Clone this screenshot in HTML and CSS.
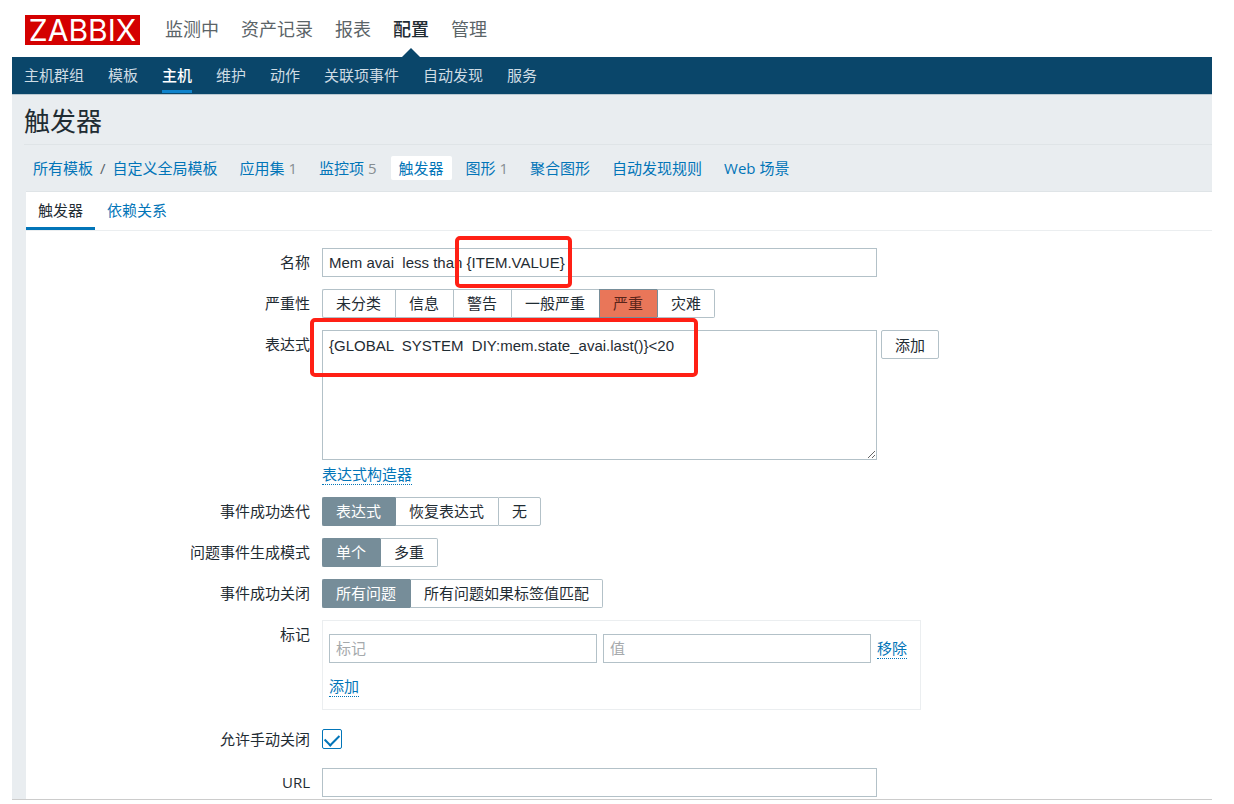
FILE: index.html
```html
<!DOCTYPE html>
<html lang="zh-CN">
<head>
<meta charset="utf-8">
<title>触发器配置</title>
<link rel="stylesheet" href="styles.css">
</head>
<body>
<div class="page">
  <header>
    <nav class="main-nav">
      <a class="logo" href="#">ZABBIX</a>
      <a href="#">监测中</a>
      <a href="#">资产记录</a>
      <a href="#">报表</a>
      <a class="active" href="#">配置</a>
      <a href="#">管理</a>
    </nav>
    <nav class="sub-nav">
      <a href="#">主机群组</a>
      <a href="#">模板</a>
      <a class="active" href="#">主机</a>
      <a href="#">维护</a>
      <a href="#">动作</a>
      <a href="#">关联项事件</a>
      <a href="#">自动发现</a>
      <a href="#">服务</a>
    </nav>
  </header>
  <main>
    <h1>触发器</h1>
    <nav class="object-nav">
      <div class="crumbs"><a href="#">所有模板</a><span>/</span><a href="#">自定义全局模板</a></div>
      <div><a href="#">应用集</a> <sup>1</sup></div>
      <div><a href="#">监控项</a> <sup>5</sup></div>
      <div class="selected"><a href="#">触发器</a></div>
      <div><a href="#">图形</a> <sup>1</sup></div>
      <div><a href="#">聚合图形</a></div>
      <div><a href="#">自动发现规则</a></div>
      <div><a href="#">Web 场景</a></div>
    </nav>
    <section class="panel">
      <div class="tabs">
        <a class="active" href="#">触发器</a>
        <a href="#">依赖关系</a>
      </div>
      <form class="form">
        <label class="name" for="title">名称</label>
        <div class="field">
          <input class="text" id="title" type="text" value="Mem avai  less than {ITEM.VALUE}">
          <span class="mark mark-value"></span>
        </div>

        <span class="name" id="severity">严重性</span>
        <div class="segments severity" role="radiogroup" aria-labelledby="severity">
          <label><input type="radio" name="severity">未分类</label>
          <label><input type="radio" name="severity">信息</label>
          <label><input type="radio" name="severity">警告</label>
          <label><input type="radio" name="severity">一般严重</label>
          <label><input type="radio" name="severity" checked>严重</label>
          <label><input type="radio" name="severity">灾难</label>
        </div>

        <label class="name" for="expression">表达式</label>
        <div class="field">
          <div class="expression">
            <textarea class="text" id="expression">{GLOBAL  SYSTEM  DIY:mem.state_avai.last()}&lt;20</textarea>
            <button class="button" type="button">添加</button>
          </div>
          <button class="link" type="button">表达式构造器</button>
          <span class="mark mark-expression"></span>
        </div>

        <span class="name" id="recovery">事件成功迭代</span>
        <div class="segments" role="radiogroup" aria-labelledby="recovery">
          <label><input type="radio" name="recovery" checked>表达式</label>
          <label><input type="radio" name="recovery">恢复表达式</label>
          <label><input type="radio" name="recovery">无</label>
        </div>

        <span class="name" id="mode">问题事件生成模式</span>
        <div class="segments" role="radiogroup" aria-labelledby="mode">
          <label><input type="radio" name="mode" checked>单个</label>
          <label><input type="radio" name="mode">多重</label>
        </div>

        <span class="name" id="closes">事件成功关闭</span>
        <div class="segments" role="radiogroup" aria-labelledby="closes">
          <label><input type="radio" name="closes" checked>所有问题</label>
          <label><input type="radio" name="closes">所有问题如果标签值匹配</label>
        </div>

        <span class="name">标记</span>
        <div class="tags">
          <div class="tag-row">
            <input class="text" type="text" placeholder="标记" aria-label="标记">
            <input class="text" type="text" placeholder="值" aria-label="值">
            <button class="link" type="button">移除</button>
          </div>
          <button class="link" type="button">添加</button>
        </div>

        <label class="name tall" for="manual">允许手动关闭</label>
        <div class="check-cell"><input class="check" id="manual" type="checkbox" checked></div>

        <label class="name" for="url">URL</label>
        <div class="field"><input class="text" id="url" type="text"></div>
      </form>
    </section>
  </main>
</div>
</body>
</html>
```
FILE: styles.css
```css
* {
  box-sizing: border-box;
}

body {
  margin: 0;
  background: #fff;
  color: #1f2c33;
  font: 15px/20px "Open Sans", "Noto Sans CJK SC", sans-serif;
}

a {
  color: #0275b8;
  text-decoration: none;
}

.page {
  margin: 0 22px 4px 12px;
  border-bottom: 1px solid #ccc;
}

/* Header */
.main-nav {
  display: flex;
  align-items: center;
  gap: 22px;
  height: 57px;
  padding: 0 13px;
  font-size: 18px;
}

.main-nav a {
  color: #5b6468;
}

.main-nav .logo {
  width: 115px;
  margin: 2px 3px 0 0;
  background: #d40000;
  color: #fff;
  font: 30px/30px Inter, "Liberation Sans", sans-serif;
  text-align: center;
}

.main-nav .active {
  position: relative;
  color: #1f2c33;
  font-weight: 500;
}

.main-nav .active::after {
  content: "";
  position: absolute;
  left: 50%;
  bottom: -19px;
  margin-left: -10px;
  border: 10px solid transparent;
  border-top-width: 0;
  border-bottom-color: #0a466a;
}

.sub-nav {
  display: flex;
  gap: 24px;
  height: 37px;
  padding: 0 12px;
  background: #0a466a;
}

.sub-nav a {
  height: 36px;
  padding-top: 8px;
  border-bottom: 3px solid transparent;
  color: #cfdce4;
}

.sub-nav .active {
  border-bottom-color: #0f83cc;
  color: #fff;
  font-weight: 500;
}

/* Page title and object navigation */
main {
  padding-left: 12px;
  background: #e9edf0;
  border-top: 1px solid #b9c8d1;
}

h1 {
  margin: 0;
  padding: 8px 0 5px;
  border-bottom: 1px solid #dfe4e7;
  font-size: 26px;
  font-weight: 400;
  line-height: 36px;
}

.object-nav {
  display: flex;
  align-items: center;
  gap: 6px;
  height: 46px;
  padding: 0 1px;
}

.object-nav div {
  padding: 2px 8px;
}

.crumbs {
  display: flex;
  gap: 7px;
  color: #5b6468;
}

.object-nav sup {
  color: #868d92;
  font-size: 15px;
  line-height: 20px;
  vertical-align: baseline;
}

.object-nav .selected {
  background: #fff;
  border-radius: 2px;
}

/* Tabbed panel */
.panel {
  margin-left: 2px;
  background: #fff;
  border-top: 1px solid #dfe4e7;
}

.tabs {
  display: flex;
  height: 39px;
  border-bottom: 1px solid #ebeef0;
}

.tabs a {
  padding: 8px 12px 7px;
  border-bottom: 3px solid transparent;
}

.tabs .active {
  border-bottom-color: #0275b8;
  color: #1f2c33;
}

/* Form */
.form {
  display: grid;
  grid-template-columns: 284px minmax(0, 1fr);
  gap: 12px;
  padding: 17px 0 2px;
}

.name {
  padding: 4px 0;
  text-align: right;
}

.tall {
  padding: 7px 0;
}

.field {
  position: relative;
}

.text {
  display: block;
  width: 100%;
  max-width: 555px;
  height: 29px;
  margin: 0;
  padding: 0 6px;
  border: 1px solid #b3c1c8;
  background: #fff;
  color: #1f2c33;
  font: 15px/20px "Liberation Sans", Arial, "Noto Sans CJK SC", sans-serif;
}

.text::placeholder {
  color: #a5a9ac;
}

textarea.text {
  height: 130px;
  padding: 5px 6px;
  resize: vertical;
}

.expression {
  display: flex;
  align-items: flex-start;
  gap: 4px;
}

.button {
  flex: none;
  height: 29px;
  padding: 0 13px;
  border: 1px solid #b3c1c8;
  border-radius: 2px;
  background: #fff;
  color: #1f2c33;
  font: inherit;
}

.link {
  display: block;
  padding: 0;
  border: 0;
  border-bottom: 1px dotted #0275b8;
  background: none;
  color: #0275b8;
  font: inherit;
}

.expression + .link {
  margin: 4px 0 0;
}

.segments {
  display: flex;
}

.segments label {
  height: 29px;
  padding: 3px 14px 0 13px;
  border: 1px solid #b3c1c8;
  border-right-width: 0;
}

.segments label:first-child {
  border-radius: 2px 0 0 2px;
}

.segments label:last-child {
  padding-right: 13px;
  border-right-width: 1px;
  border-radius: 0 2px 2px 0;
}

.segments label:has(:checked) {
  border-color: #768d99;
  background: #768d99;
  color: #fff;
}

.severity label:has(:checked) {
  background: #e97659;
  color: #59241a;
}

.segments label:has(:checked) + label {
  border-left-color: #768d99;
}

.segments input {
  position: absolute;
  margin: 0;
  opacity: 0;
}

.tags {
  width: 100%;
  max-width: 599px;
  padding: 13px 6px 12px;
  border: 1px solid #ebeef0;
}

.tag-row {
  display: flex;
  align-items: center;
  gap: 6px;
  margin-bottom: 13px;
}

.tag-row .text {
  flex: 0 1 268px;
}

.tag-row .link {
  flex: none;
}

.check-cell {
  display: flex;
  align-items: center;
}

.check {
  appearance: none;
  width: 20px;
  height: 20px;
  margin: 0;
  border: 1px solid #0275b8;
  border-radius: 2px;
  background: #fff;
}

.check:checked::after {
  content: "";
  display: block;
  width: 12px;
  height: 7px;
  margin: 4px auto 0;
  border: solid #0275b8;
  border-width: 0 0 2px 2px;
  transform: rotate(-45deg);
}

/* Highlight frames */
.mark {
  position: absolute;
  border: 4px solid #ff2015;
  border-radius: 5px;
  pointer-events: none;
}

.mark-value {
  top: -12px;
  left: 133px;
  width: 117px;
  height: 52px;
}

.mark-expression {
  top: -12px;
  left: -12px;
  width: 388px;
  height: 59px;
}
```
